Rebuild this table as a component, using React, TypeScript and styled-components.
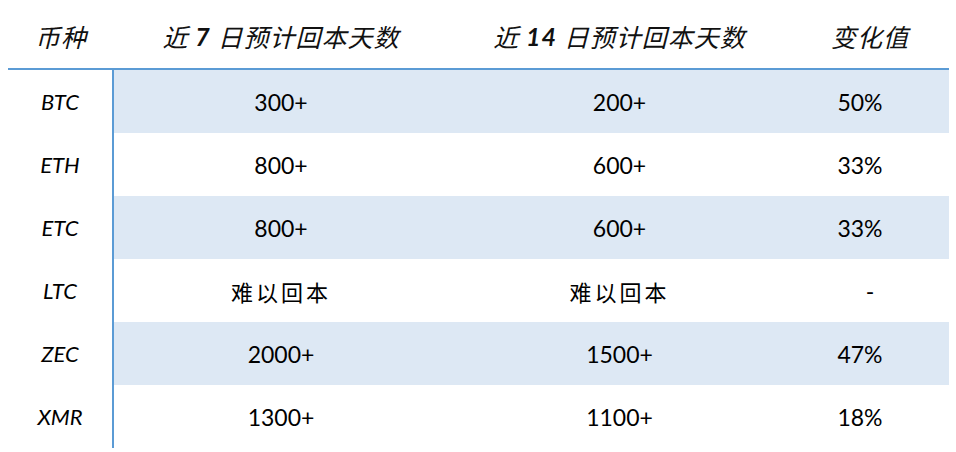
import styled, { createGlobalStyle } from "styled-components";

const GlobalStyle = createGlobalStyle`
    html, body {
        margin: 0;
        padding: 0;
        background: #ffffff;
    }
    body {
        font-family: Lato, "Noto Sans CJK SC", sans-serif;
        color: #000000;
    }
`;

type RowData = {
    coin: string;
    d7: string;
    d14: string;
    change: string;
};

const rows: RowData[] = [
    { coin: "BTC", d7: "300+", d14: "200+", change: "50%" },
    { coin: "ETH", d7: "800+", d14: "600+", change: "33%" },
    { coin: "ETC", d7: "800+", d14: "600+", change: "33%" },
    { coin: "LTC", d7: "难以回本", d14: "难以回本", change: "-" },
    { coin: "ZEC", d7: "2000+", d14: "1500+", change: "47%" },
    { coin: "XMR", d7: "1300+", d14: "1100+", change: "18%" },
];

const isText = (v: string) => !/\d/.test(v) && v !== "-";

function App() {
    return (
        <>
            <GlobalStyle />
            <Page>
                <HeadRow>
                    <HeadCell>币种</HeadCell>
                    <HeadCell>
                        近 <Num>7</Num> 日预计回本天数
                    </HeadCell>
                    <HeadCell>
                        近 <Num>14</Num> 日预计回本天数
                    </HeadCell>
                    <HeadCell>变化值</HeadCell>
                </HeadRow>
                {rows.map((row, i) => (
                    <BodyRow key={row.coin} $shaded={i % 2 === 0}>
                        <CoinCell>{row.coin}</CoinCell>
                        <ValueCell $cjk={isText(row.d7)}>{row.d7}</ValueCell>
                        <ValueCell $cjk={isText(row.d14)}>{row.d14}</ValueCell>
                        <ValueCell $shift={row.change !== "-"}>{row.change}</ValueCell>
                    </BodyRow>
                ))}
            </Page>
        </>
    );
}

export default App;

const Page = styled.div`
    width: 941px;
    margin-left: 8px;
`;

const Columns = styled.div`
    display: grid;
    grid-template-columns: 106px 334px 343px 158px;
`;

const HeadRow = styled(Columns)`
    height: 68px;
    border-bottom: 2px solid #5b9bd5;
`;

const HeadCell = styled.div`
    display: flex;
    align-items: center;
    justify-content: center;
    padding-top: 3px;
    font-family: Lato, "Noto Sans CJK SC", sans-serif;
    font-style: italic;
    font-size: 25px;
    letter-spacing: 1px;
    white-space: pre;
    color: #111111;
`;

const Num = styled.span`
    font-weight: 700;
`;

const BodyRow = styled(Columns)<{ $shaded: boolean }>`
    height: 63px;
    & > div:not(:first-child) {
        background: ${(p) => (p.$shaded ? "#dde8f4" : "#ffffff")};
    }
`;

const CoinCell = styled.div`
    display: flex;
    align-items: center;
    justify-content: center;
    border-right: 2px solid #5b9bd5;
    font-style: italic;
    font-size: 22px;
    color: #000000;
`;

const ValueCell = styled.div<{ $cjk?: boolean; $shift?: boolean }>`
    display: flex;
    align-items: center;
    justify-content: center;
    font-size: ${(p) => (p.$cjk ? "22px" : "23px")};
    letter-spacing: ${(p) => (p.$cjk ? "3px" : "0")};
    padding-right: ${(p) => (p.$shift ? "20px" : "0")};
    color: #000000;
`;
